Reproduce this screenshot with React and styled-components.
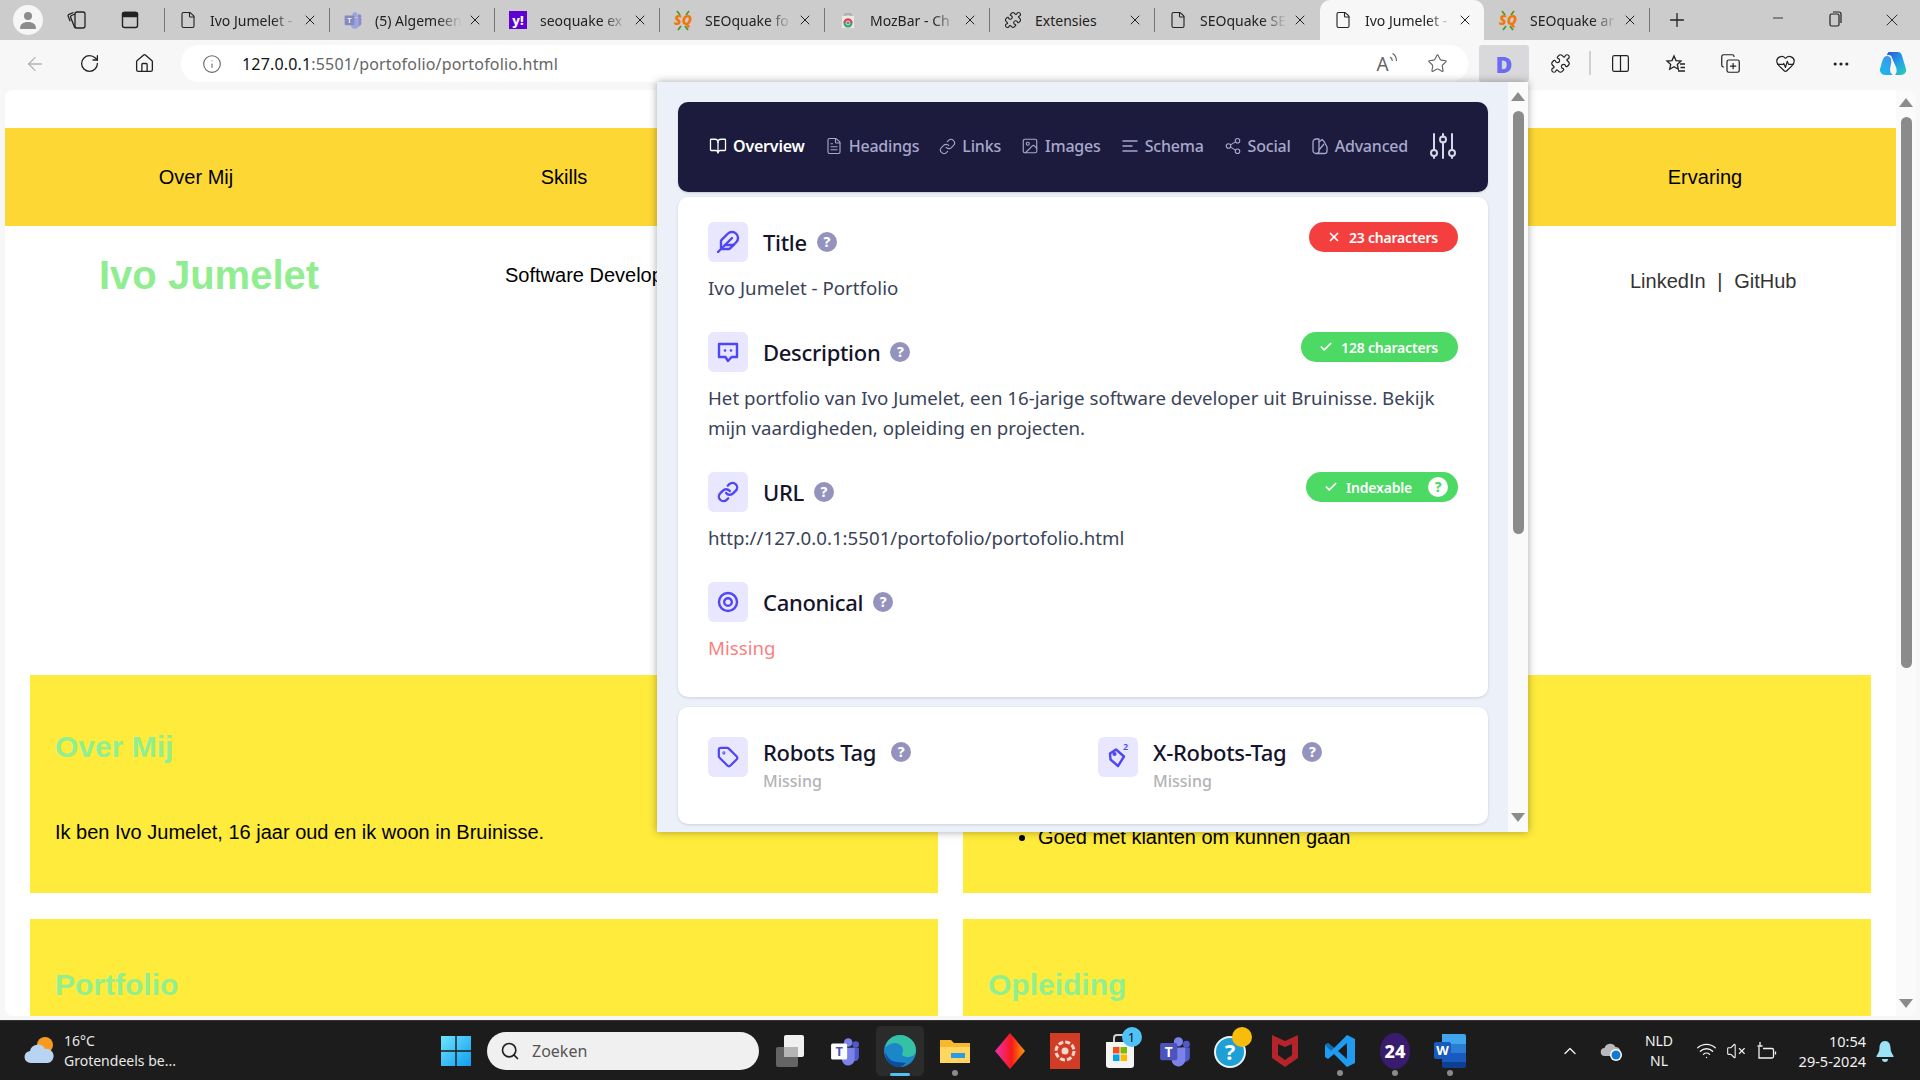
import React from 'react';
import styled, { createGlobalStyle } from 'styled-components';
import {
  ArrowLeft, RotateCw, House, Info, Star, Puzzle, Columns2, CopyPlus, HeartPulse, Ellipsis,
  File, X, Plus, Minus, BookOpen, FileText, Link as LinkIcon, Image, Share2,
  Feather, Tag, ChevronUp, Wifi, VolumeX, Search, Check,
} from 'lucide-react';

const UI = '"Noto Sans", "Open Sans", sans-serif';
const ARIAL = '"Liberation Sans", Arial, sans-serif';

const GlobalStyle = createGlobalStyle`
  html, body { margin: 0; padding: 0; height: 100%; overflow: hidden; }
  body { font-family: ${UI}; background: #f7f7f7; }
  * { box-sizing: border-box; }
`;

const Screen = styled.div`
  position: relative;
  width: 1920px;
  height: 1080px;
  display: flex;
  flex-direction: column;
  overflow: hidden;
`;

/* browser tabs */
const TabStrip = styled.div`
  height: 40px;
  background: #cccccc;
  display: flex;
  align-items: center;
  flex: none;
`;
const StripLeft = styled.div`
  width: 164px;
  display: flex;
  align-items: center;
  padding-left: 13px;
  flex: none;
`;
const Avatar = styled.div`
  width: 30px;
  height: 30px;
  border-radius: 50%;
  background: #f6f6f6;
  display: flex;
  align-items: center;
  justify-content: center;
`;
const StripIcon = styled.div`
  width: ${(p) => p.$w || 54}px;
  display: flex;
  justify-content: center;
  color: #222;
`;
const TabSep = styled.div`
  width: 1px;
  height: 24px;
  flex: none;
  background: ${(p) => (p.$hidden ? 'transparent' : '#777')};
`;
const Tab = styled.div`
  width: 164px;
  height: 40px;
  flex: none;
  display: flex;
  align-items: center;
  padding: 0 11px 0 14px;
  border-radius: 10px 10px 0 0;
  background: ${(p) => (p.$active ? '#f7f7f7' : 'transparent')};
  color: #222;
`;
const TabFav = styled.div`
  width: 18px;
  height: 18px;
  margin-right: 13px;
  flex: none;
  display: flex;
  align-items: center;
  justify-content: center;
`;
const TabLabel = styled.div`
  flex: 1;
  min-width: 0;
  overflow: hidden;
  white-space: nowrap;
  font-size: 14px;
  color: #222;
  mask-image: ${(p) => (p.$plain ? 'none' : 'linear-gradient(to right, #000 68%, transparent 94%)')};
`;
const WindowControls = styled.div`
  margin-left: auto;
  display: flex;
`;
const WindowButton = styled.div`
  width: 57px;
  display: flex;
  justify-content: center;
  color: #222;
`;

/* address bar row */
const Toolbar = styled.div`
  height: 50px;
  flex: none;
  background: #f7f7f7;
  display: flex;
  align-items: flex-start;
  padding: 5px 0 0 7px;
`;
const ToolButton = styled.div`
  width: ${(p) => p.$w || 55}px;
  height: 37px;
  flex: none;
  display: flex;
  align-items: center;
  justify-content: center;
  color: ${(p) => p.$color || '#222'};
`;
const AddressBar = styled.div`
  width: 1287px;
  height: 37px;
  margin-left: 9px;
  background: #fff;
  border-radius: 18px;
  display: flex;
  align-items: center;
  padding: 0 6px 0 21px;
  flex: none;
`;
const UrlText = styled.div`
  margin-left: 20px;
  font-size: 16px;
  letter-spacing: 0.17px;
  color: #666;
  flex: 1;
  b { font-weight: 400; color: #111; }
`;
const AddressIcon = styled.div`
  width: 50px;
  display: flex;
  justify-content: center;
  color: #666;
`;
const ReadAloud = styled.div`
  display: flex;
  align-items: flex-start;
  font-size: 19px;
  line-height: 24px;
  color: #666;
`;
const ExtButton = styled.div`
  width: 50px;
  height: 37px;
  margin: 0 4px 0 11px;
  flex: none;
  background: #d9d9dc;
  border-radius: 3px;
  display: flex;
  align-items: center;
  justify-content: center;
  font-family: ${UI};
  font-weight: 900;
  font-size: 23px;
  color: #6b6bf5;
`;
const ToolSep = styled.div`
  width: 2px;
  height: 24px;
  margin: 6px 2px 0 1px;
  background: #d0d0d0;
  flex: none;
`;

/* the page in the browser */
const Viewport = styled.div`
  height: 930px;
  flex: none;
  background: #f7f7f7;
  padding: 0 4px 4px 5px;
`;
const Page = styled.div`
  height: 100%;
  background: #fff;
  border-radius: 8px;
  display: flex;
  overflow: hidden;
`;
const Content = styled.div`
  width: 1891px;
  flex: none;
  padding-top: 38px;
  font-family: ${ARIAL};
  color: #000;
`;
const SiteNav = styled.nav`
  height: 98px;
  background: #fdd835;
  display: flex;
  align-items: center;
  justify-content: space-around;
  font-size: 20px;
`;
const Hero = styled.header`
  height: 449px;
  display: grid;
  grid-template-columns: 406px 1125px auto;
  padding: 26px 0 0 94px;
  align-items: start;
`;
const SiteTitle = styled.h1`
  margin: 0;
  font-size: 40px;
  line-height: 46px;
  font-weight: 700;
  color: #90ee90;
`;
const Role = styled.div`
  font-size: 20px;
  line-height: 46px;
`;
const Socials = styled.div`
  font-size: 20px;
  line-height: 24px;
  padding-top: 17px;
  color: #333;
  white-space: pre;
  word-spacing: 0.3px;
`;
const Blocks = styled.div`
  display: grid;
  grid-template-columns: 908px 908px;
  column-gap: 25px;
  row-gap: 26px;
  padding: 0 25px;
  grid-auto-rows: 218px;
`;
const Block = styled.section`
  background: #ffeb3b;
  padding: ${(p) => p.$top || 55}px 25px 0;
`;
const BlockTitle = styled.h2`
  margin: 0 0 56px;
  font-size: 30px;
  line-height: 34px;
  font-weight: 700;
  color: #90f090;
`;
const BlockText = styled.p`
  margin: 0;
  font-size: 20px;
  line-height: 24px;
`;
const BlockList = styled.ul`
  margin: 0;
  padding-left: 50px;
  font-size: 20px;
  line-height: 24px;
`;

/* scrollbars */
const ScrollTrack = styled.div`
  width: 20px;
  flex: none;
  display: flex;
  flex-direction: column;
  align-items: center;
  padding: ${(p) => p.$pad}px 0;
  background: ${(p) => p.$bg};
`;
const ArrowUp = styled.div`
  width: 0;
  height: 0;
  border-left: 7px solid transparent;
  border-right: 7px solid transparent;
  border-bottom: 9px solid #8b8b8b;
  flex: none;
`;
const ArrowDown = styled(ArrowUp)`
  margin-top: auto;
  border-bottom: 0;
  border-top: 9px solid #8b8b8b;
`;
const Thumb = styled.div`
  width: 11px;
  margin-top: 10px;
  height: ${(p) => p.$h}px;
  background: #8b8b8b;
  border-radius: 6px;
  flex: none;
`;

/* the SEO extension popup, lies over the page */
const Popup = styled.div`
  position: absolute;
  left: 657px;
  top: 82px;
  width: 871px;
  height: 750px;
  background: #ecf0f8;
  display: flex;
  box-shadow: 0 0 8px rgba(0, 0, 0, 0.35);
  overflow: hidden;
`;
const PopupBody = styled.div`
  width: 851px;
  flex: none;
  padding: 20px 20px 0 21px;
  display: flex;
  flex-direction: column;
`;
const PopupNav = styled.div`
  height: 90px;
  flex: none;
  background: #1c1b3d;
  border-radius: 10px;
  display: flex;
  align-items: center;
  gap: 20px;
  padding: 0 0 2px 31px;
  box-shadow: 0 1px 2px rgba(0, 0, 0, 0.15);
`;
const NavItem = styled.div`
  display: flex;
  align-items: center;
  gap: 6px;
  font-size: 16px;
  letter-spacing: -0.2px;
  font-weight: ${(p) => (p.$active ? 600 : 500)};
  color: ${(p) => (p.$active ? '#fff' : '#a7a8cb')};
`;
const NavEnd = styled.div`
  color: #d6d6e8;
  display: flex;
  margin-left: 1px;
`;
const Card = styled.div`
  background: #fff;
  border-radius: 10px;
  box-shadow: 0 1px 3px rgba(40, 40, 90, 0.15);
  flex: none;
`;
const MainCard = styled(Card)`
  height: 500px;
  margin-top: 5px;
  padding: 25px 30px 0;
`;
const RobotsCard = styled(Card)`
  height: 117px;
  margin-top: 10px;
  padding: 30px 30px 0;
  display: grid;
  grid-template-columns: 390px 1fr;
`;
const Field = styled.div`
  margin-bottom: 29px;
`;
const FieldHead = styled.div`
  display: flex;
  align-items: flex-start;
  justify-content: space-between;
`;
const FieldName = styled.div`
  display: flex;
  align-items: center;
  height: 40px;
`;
const IconBox = styled.div`
  position: relative;
  width: 40px;
  height: 40px;
  flex: none;
  border-radius: 6px;
  background: #e9e6ff;
  color: #4f46f5;
  display: flex;
  align-items: center;
  justify-content: center;
`;
const TagCount = styled.span`
  position: absolute;
  left: 25px;
  top: 4px;
  font-size: 9px;
  line-height: 11px;
  font-weight: 600;
`;
const FieldTitle = styled.div`
  margin-left: 15px;
  font-size: 22px;
  font-weight: 500;
  letter-spacing: -0.3px;
  color: #14142b;
`;
const Help = styled.span`
  width: 20px;
  height: 20px;
  border-radius: 50%;
  flex: none;
  margin-left: ${(p) => p.$gap || 10}px;
  background: ${(p) => (p.$light ? '#fff' : '#9493bd')};
  color: ${(p) => (p.$light ? '#4cd964' : '#fff')};
  font-size: 14px;
  font-weight: 800;
  line-height: 20px;
  text-align: center;
`;
const Pill = styled.div`
  height: 30px;
  border-radius: 15px;
  display: flex;
  align-items: center;
  gap: 8px;
  padding: 0 ${(p) => p.$right || 20}px 0 18px;
  background: ${(p) => p.$bg};
  color: #fff;
  font-size: 14px;
  font-weight: 600;
  letter-spacing: -0.2px;
`;
const FieldText = styled.div`
  margin-top: 11px;
  font-size: 18.7px;
  line-height: 30px;
  color: ${(p) => p.$color || '#3a4358'};
`;
const RobotsItem = styled.div`
  display: flex;
`;
const RobotsText = styled.div`
  display: flex;
  flex-direction: column;
`;
const RobotsHead = styled.div`
  display: flex;
  align-items: center;
  height: 30px;
`;
const RobotsMissing = styled.div`
  margin-left: 15px;
  font-size: 16px;
  line-height: 28px;
  font-weight: 500;
  color: #b3b3b3;
`;

/* windows taskbar */
const Taskbar = styled.div`
  height: 60px;
  flex: none;
  background: #1c1c1c;
  border-top: 1px solid #333;
  display: flex;
  align-items: center;
  color: #f2f2f2;
`;
const Weather = styled.div`
  width: 428px;
  flex: none;
  display: flex;
  align-items: center;
  gap: 7px;
  padding-left: 23px;
  font-size: 14px;
  line-height: 20px;
  color: #e8e8e8;
`;
const SearchBox = styled.div`
  width: 272px;
  height: 38px;
  flex: none;
  margin: 0 3.5px 0 4px;
  background: #f0f0f0;
  border-radius: 19px;
  display: flex;
  align-items: center;
  gap: 12px;
  padding-left: 13px;
  color: #222;
  font-size: 16px;
  span { color: #555; }
`;
const AppSlot = styled.div`
  position: relative;
  width: 55px;
  height: 59px;
  flex: none;
  display: flex;
  align-items: center;
  justify-content: center;
`;
const ActiveBack = styled.div`
  width: 48px;
  height: 50px;
  border-radius: 5px;
  background: ${(p) => (p.$on ? '#2b2b2b' : 'transparent')};
  display: flex;
  align-items: center;
  justify-content: center;
`;
const Running = styled.div`
  position: absolute;
  left: 50%;
  bottom: 4px;
  transform: translateX(-50%);
  width: ${(p) => (p.$on ? 20 : 6)}px;
  height: ${(p) => (p.$on ? 3 : 6)}px;
  border-radius: 3px;
  background: ${(p) => (p.$on ? '#4fc3f7' : '#8a8a8a')};
`;
const Tray = styled.div`
  margin-left: auto;
  display: flex;
  align-items: center;
  padding-right: 25px;
`;
const TraySlot = styled.div`
  width: ${(p) => p.$w || 30}px;
  display: flex;
  justify-content: center;
  color: #f2f2f2;
`;
const Lang = styled.div`
  width: 52px;
  margin-right: 6px;
  text-align: center;
  font-size: 14px;
  line-height: 20px;
`;
const Clock = styled.div`
  width: 85px;
  text-align: right;
  font-size: 14.5px;
  line-height: 20px;
  margin-right: 9px;
`;

const tabs = [
  { label: 'Ivo Jumelet -', fav: 'file' },
  { label: '(5) Algemeen', fav: 'teams' },
  { label: 'seoquake ex', fav: 'yahoo' },
  { label: 'SEOquake fo', fav: 'sq' },
  { label: 'MozBar - Ch', fav: 'moz' },
  { label: 'Extensies', fav: 'puzzle', plain: true },
  { label: 'SEOquake SE', fav: 'file' },
  { label: 'Ivo Jumelet -', fav: 'file', active: true },
  { label: 'SEOquake ar', fav: 'sq' },
];

function Favicon({ type }) {
  if (type === 'file') return <File size={18} strokeWidth={1.5} />;
  if (type === 'puzzle') return <Puzzle size={18} strokeWidth={1.5} />;
  if (type === 'teams') return <TeamsIcon size={18} faded />;
  if (type === 'yahoo') {
    return (
      <svg width="18" height="18" viewBox="0 0 18 18">
        <rect width="18" height="18" fill="#5f01d1" />
        <text x="9" y="14" textAnchor="middle" fontSize="13" fontWeight="800" fontFamily={UI} fill="#fff">y!</text>
      </svg>
    );
  }
  if (type === 'sq') {
    return (
      <svg width="22" height="24" viewBox="0 0 22 24" style={{ flex: 'none' }}>
        <path d="M5 3l3 4M17 3l-3 4M6 22l3-4M16 22l-3-4" stroke="#4c9a2a" strokeWidth="1.8" />
        <text x="11" y="17" textAnchor="middle" fontSize="14" fontWeight="900" fontStyle="italic" fontFamily={UI} fill="#f0780a">SQ</text>
      </svg>
    );
  }
  return (
    <svg width="18" height="18" viewBox="0 0 18 18">
      <path d="M3 5h12v12H3z" fill="#e8e8e8" />
      <path d="M6 5V3h6v2" fill="none" stroke="#999" />
      <circle cx="9" cy="12" r="4.5" fill="#34a853" />
      <path d="M4.5 12a4.5 4.5 0 0 1 9 0z" fill="#ea4335" />
      <circle cx="9" cy="12" r="2" fill="#4285f4" stroke="#fff" strokeWidth=".7" />
    </svg>
  );
}

function TeamsIcon({ size = 28, faded }) {
  return (
    <svg width={size} height={size} viewBox="0 0 28 28" opacity={faded && size < 20 ? 0.55 : 1}>
      <circle cx="17" cy="6" r="4" fill="#7b83eb" />
      <circle cx="24" cy="8" r="3" fill="#5059c9" />
      <path d="M20 11h7v9a4 4 0 0 1-7 2z" fill="#5059c9" />
      <path d="M9 11h14v10a6 6 0 0 1-12 1z" fill="#7b83eb" />
      <rect x="1" y="7" width="15" height="15" rx="1.5" fill={faded ? '#4b53bc' : '#fff'} />
      <text x="8.5" y="19" textAnchor="middle" fontSize="12" fontWeight="700" fontFamily={UI} fill={faded ? '#fff' : '#4b53bc'}>T</text>
    </svg>
  );
}

function WorkspacesIcon() {
  return (
    <svg width="22" height="22" viewBox="0 0 22 22" fill="none" stroke="#222" strokeWidth="1.3">
      <rect x="9" y="3" width="10" height="16" rx="2" />
      <path d="M9 5L5.500 6.500a1.500 1.500 0 0 0-.8 2l3.800 9.500a1.500 1.500 0 0 0 1.500.9" />
      <path d="M7.500 3.500L3 5.300a1.500 1.500 0 0 0-.8 2l2 5" />
    </svg>
  );
}

function VerticalTabsIcon() {
  return (
    <svg width="20" height="20" viewBox="0 0 20 20" fill="none" stroke="#222" strokeWidth="1.4">
      <rect x="2.500" y="2.500" width="15" height="15" rx="2" />
      <rect x="2.500" y="2.500" width="15" height="4" rx="1.500" fill="#222" />
    </svg>
  );
}

function RestoreIcon() {
  return (
    <svg width="18" height="18" viewBox="0 0 18 18" fill="none" stroke="#222" strokeWidth="1.2">
      <rect x="4" y="4" width="9" height="12" rx="1.500" />
      <path d="M7 2h6a2 2 0 0 1 2 2v9" />
    </svg>
  );
}

function SoundWaves() {
  return (
    <svg width="9" height="14" viewBox="0 0 9 14" fill="none" stroke="#666" strokeWidth="1.2">
      <path d="M1 5c1.500.8 2.300 2.200 2.300 4M3.500 1.500C6 2.800 7.500 5 7.500 9" />
    </svg>
  );
}

function FavoritesIcon() {
  return (
    <svg width="22" height="22" viewBox="0 0 22 22" fill="none" stroke="#222" strokeWidth="1.3">
      <path d="M9 3l2 4.600 5 .5-3.700 3.300 1 4.900L9 13.800l-4.300 2.500 1-4.900L2 8.100l5-.5z" />
      <path d="M15 11h5M15.500 14.500h4.500M13 18h7" />
    </svg>
  );
}

function CopilotIcon() {
  return (
    <svg width="28" height="28" viewBox="0 0 28 28">
      <defs>
        <linearGradient id="cop" x1="0" y1="0" x2="1" y2="1">
          <stop offset="0" stopColor="#2458d8" />
          <stop offset=".6" stopColor="#25a7e8" />
          <stop offset="1" stopColor="#2ecfa8" />
        </linearGradient>
        <linearGradient id="cop2" x1="0" y1="1" x2="1" y2="0">
          <stop offset="0" stopColor="#12c0e8" />
          <stop offset="1" stopColor="#4a8cf0" />
        </linearGradient>
      </defs>
      <path d="M10 2h9c3 0 4 3 5 7l3 10c1 3-2 6-5 6h-6c2-2 2-5 1-8L13 8c-.5-3-3-3.500-5-2.500C8 4 9 2 10 2z" fill="url(#cop)" />
      <path d="M8 6c-3 0-4 3-5 6l-2 7c-.5 3 2 6 5 6h8c-2-1-3-3-3-6l1-5c1-4 0-8-4-8z" fill="url(#cop2)" />
    </svg>
  );
}

function SchemaIcon() {
  return (
    <svg width="18" height="18" viewBox="0 0 18 18" fill="none" stroke="currentColor" strokeWidth="1.5" strokeLinecap="round">
      <path d="M2 4h14M2 9h9M2 14h14" />
    </svg>
  );
}

function AdvancedIcon() {
  return (
    <svg width="18" height="18" viewBox="0 0 18 18" fill="none" stroke="currentColor" strokeWidth="1.3" strokeLinejoin="round">
      <path d="M5 2h3v12a2.500 2.500 0 0 1-2.500 2.500H5A3 3 0 0 1 2 13.500V5a3 3 0 0 1 3-3z" />
      <path d="M8 5l3-2.500 2 2L16 10v4a2.500 2.500 0 0 1-2.500 2.500h-8" />
      <path d="M8 13l5-6" />
    </svg>
  );
}

function SettingsSlidersIcon() {
  return (
    <svg width="28" height="28" viewBox="0 0 28 28" fill="none" stroke="currentColor" strokeWidth="2" strokeLinecap="round">
      <path d="M5 2v16M14 10v16M23 2v16M5 24v2M14 2v3M23 24v2" />
      <circle cx="5" cy="21" r="3" />
      <circle cx="14" cy="7.500" r="3" />
      <circle cx="23" cy="21" r="3" />
    </svg>
  );
}

function BubbleIcon() {
  return (
    <svg width="24" height="24" viewBox="0 0 24 24" fill="none" stroke="currentColor" strokeWidth="2.400" strokeLinejoin="round">
      <path d="M3 4h18v13h-5.500L12 21l-2.500-4H3z" />
      <circle cx="9" cy="10.500" r="1.300" fill="currentColor" stroke="none" />
      <circle cx="15" cy="10.500" r="1.300" fill="currentColor" stroke="none" />
    </svg>
  );
}

function RingsIcon() {
  return (
    <svg width="24" height="24" viewBox="0 0 24 24" fill="none" stroke="currentColor" strokeWidth="2.400">
      <circle cx="12" cy="12" r="9" />
      <circle cx="12" cy="12" r="3.800" />
    </svg>
  );
}

function TagShape() {
  return (
    <svg width="26" height="26" viewBox="0 0 26 26" fill="none" stroke="currentColor" strokeWidth="2.400" strokeLinejoin="round">
      <path d="M5 9.500L11 5.500 19 12.500 13 22 5.500 15.500z" />
      <circle cx="9.500" cy="10" r=".9" fill="currentColor" />
    </svg>
  );
}

function WeatherIcon() {
  return (
    <svg width="34" height="34" viewBox="0 0 34 34">
      <circle cx="22" cy="11" r="8" fill="#f79a1e" />
      <path d="M8 29a6 6 0 0 1-1-12 8 8 0 0 1 15-2 7 7 0 0 1 3 14z" fill="#b8d4f2" />
    </svg>
  );
}

function StartIcon() {
  return (
    <svg width="30" height="30" viewBox="0 0 30 30">
      <defs>
        <linearGradient id="win" x1="0" y1="0" x2="1" y2="1">
          <stop offset="0" stopColor="#6fe3fb" />
          <stop offset="1" stopColor="#0f9df0" />
        </linearGradient>
      </defs>
      <path d="M0 0h14.300v14.300H0zM15.700 0H30v14.300H15.700zM0 15.700h14.300V30H0zM15.700 15.700H30V30H15.700z" fill="url(#win)" />
    </svg>
  );
}

function TaskViewIcon() {
  return (
    <svg width="30" height="36" viewBox="0 0 30 36">
      <rect x="9" y="2" width="20" height="22" rx="2" fill="#f0f0f0" />
      <rect x="1" y="14" width="22" height="20" rx="2" fill="#6a6a6a" opacity=".92" />
      <rect x="9" y="14" width="14" height="10" fill="#b5b5b5" />
    </svg>
  );
}

function EdgeIcon() {
  return (
    <svg width="34" height="34" viewBox="0 0 34 34">
      <circle cx="17" cy="17" r="16" fill="#1b87c9" />
      <path d="M2 15C3 6 10 1 17 1c9 0 16 7 16 15 0 5-4 7-8 7-3 0-6-1-6-3 0-1 1-2 1-4 0-4-4-7-8-7-5 0-9 3-10 6z" fill="#35c1a5" />
      <path d="M13 33c-7-2-11-8-11-15 2 6 7 10 12 10 3 0 6 1 9 1-3 3-6 5-10 4z" fill="#0a4f9e" />
    </svg>
  );
}

function FolderIcon() {
  return (
    <svg width="32" height="30" viewBox="0 0 32 30">
      <path d="M1 4h11l3 3h16v20H1z" fill="#f5b82e" />
      <path d="M1 11h30v16H1z" fill="#ffd75e" />
      <rect x="12" y="17" width="14" height="5" fill="#2b9ae8" />
    </svg>
  );
}

function DiamondIcon() {
  return (
    <svg width="30" height="36" viewBox="0 0 30 36">
      <defs>
        <linearGradient id="dia" x1="0" y1="0" x2="1" y2="0">
          <stop offset="0" stopColor="#ec2fb5" />
          <stop offset=".55" stopColor="#f81a1a" />
          <stop offset="1" stopColor="#fc9b07" />
        </linearGradient>
      </defs>
      <path d="M15 0l15 18-15 18L0 18z" fill="url(#dia)" />
    </svg>
  );
}

function RedAppIcon() {
  return (
    <svg width="30" height="36" viewBox="0 0 30 36">
      <rect width="30" height="36" fill="#d13d24" />
      <circle cx="15" cy="18" r="9" fill="none" stroke="#f6d8d0" strokeWidth="3" strokeDasharray="5 2.070" />
      <circle cx="15" cy="18" r="3.500" fill="#f6d8d0" />
    </svg>
  );
}

function StoreIcon() {
  return (
    <svg width="32" height="36" viewBox="0 0 32 36">
      <path d="M2 9h28v23a3 3 0 0 1-3 3H5a3 3 0 0 1-3-3z" fill="#f4f4f4" />
      <path d="M10 9V5a3 3 0 0 1 3-3h6a3 3 0 0 1 3 3v4" fill="none" stroke="#cfcfcf" strokeWidth="2" />
      <rect x="9" y="14" width="6.500" height="6.500" fill="#f25022" />
      <rect x="16.500" y="14" width="6.500" height="6.500" fill="#7fba00" />
      <rect x="9" y="21.500" width="6.500" height="6.500" fill="#00a4ef" />
      <rect x="16.500" y="21.500" width="6.500" height="6.500" fill="#ffb900" />
    </svg>
  );
}

const StoreBadge = styled.div`
  position: absolute;
  left: 29px;
  top: 6px;
  width: 20px;
  height: 20px;
  border-radius: 50%;
  background: #4fc3f7;
  color: #111;
  font-size: 13px;
  line-height: 20px;
  text-align: center;
`;
const HelpBadge = styled(StoreBadge)`
  background: #f8bc0a;
`;

function HelpAppIcon() {
  return (
    <svg width="32" height="36" viewBox="0 0 32 36">
      <circle cx="16" cy="19" r="15" fill="#1e9fd6" stroke="#e8f4fa" strokeWidth="2" />
      <text x="16" y="27" textAnchor="middle" fontSize="22" fontWeight="700" fontFamily={UI} fill="#fff">?</text>
    </svg>
  );
}

function ShieldIcon() {
  return (
    <svg width="28" height="34" viewBox="0 0 28 34">
      <path d="M1 1l13 6 13-6v23l-13 9-13-9z" fill="#b5242a" />
      <path d="M7 10l7 3 7-3v11l-7 5-7-5z" fill="#1c1c1c" />
    </svg>
  );
}

function VsCodeIcon() {
  return (
    <svg width="32" height="34" viewBox="0 0 32 34">
      <path d="M23 1l8 4v24l-8 4-13-13-6 5-3-2v-12l3-2 6 5z" fill="#1f9cf0" />
      <path d="M23 9l-9 8 9 8z" fill="#1c1c1c" />
      <path d="M1 11l3-2 6 5-3 3z" fill="#0f6fb5" />
    </svg>
  );
}

function NumberAppIcon() {
  return (
    <svg width="32" height="36" viewBox="0 0 32 36">
      <ellipse cx="16" cy="18" rx="15" ry="18" fill="#3a1c6e" />
      <text x="16" y="25" textAnchor="middle" fontSize="18" fontWeight="800" fontFamily={UI} fill="#fff">24</text>
    </svg>
  );
}

function WordIcon() {
  return (
    <svg width="32" height="36" viewBox="0 0 32 36">
      <path d="M8 1h22a2 2 0 0 1 2 2v8H8z" fill="#41a5ee" />
      <path d="M8 11h24v9H8z" fill="#2b7cd3" />
      <path d="M8 20h24v9H8z" fill="#185abd" />
      <path d="M8 29h24v4a2 2 0 0 1-2 2H10a2 2 0 0 1-2-2z" fill="#103f91" />
      <rect y="9" width="17" height="17" rx="2" fill="#185abd" />
      <text x="8.500" y="22" textAnchor="middle" fontSize="13" fontWeight="700" fontFamily={UI} fill="#fff">W</text>
    </svg>
  );
}

function OneDriveIcon() {
  return (
    <svg width="24" height="24" viewBox="0 0 24 24">
      <path d="M5 17a4 4 0 0 1-.5-8 6 6 0 0 1 11-1 5 5 0 0 1 3 9z" fill="#b9b9b9" />
      <circle cx="16" cy="16" r="6" fill="#fff" />
      <circle cx="16" cy="16" r="4.500" fill="#1479d0" />
    </svg>
  );
}

function BatteryIcon() {
  return (
    <svg width="24" height="24" viewBox="0 0 24 24" fill="none" stroke="#f2f2f2" strokeWidth="1.300">
      <path d="M5 8v11h13a1.500 1.500 0 0 0 1.500-1.500V11A1.500 1.500 0 0 0 18 9.500H9M21.500 12.500v3" />
      <path d="M6 3v4M3.500 7h5" />
    </svg>
  );
}

function BellIcon() {
  return (
    <svg width="18" height="24" viewBox="0 0 18 24">
      <path d="M9 2c4 0 5.500 3.500 5.500 7 0 4 2 6 3 8v1H.5v-1c1-2 3-4 3-8 0-3.500 1.500-7 5.500-7z" fill="#9be3f5" />
      <path d="M6 20h6a3 3 0 0 1-6 0z" fill="#9be3f5" />
    </svg>
  );
}

const navItems = [
  { label: 'Overview', icon: <BookOpen size={18} strokeWidth={1.7} />, active: true },
  { label: 'Headings', icon: <FileText size={18} strokeWidth={1.5} /> },
  { label: 'Links', icon: <LinkIcon size={17} strokeWidth={1.5} /> },
  { label: 'Images', icon: <Image size={18} strokeWidth={1.5} /> },
  { label: 'Schema', icon: <SchemaIcon /> },
  { label: 'Social', icon: <Share2 size={18} strokeWidth={1.5} /> },
  { label: 'Advanced', icon: <AdvancedIcon /> },
];

const apps = [
  { icon: <TaskViewIcon /> },
  { icon: <TeamsIcon size={30} /> },
  { icon: <EdgeIcon />, active: true },
  { icon: <FolderIcon />, dot: true },
  { icon: <DiamondIcon /> },
  { icon: <RedAppIcon /> },
  { icon: <StoreIcon />, badge: <StoreBadge>1</StoreBadge> },
  { icon: <TeamsIcon size={32} faded /> },
  { icon: <HelpAppIcon />, badge: <HelpBadge /> },
  { icon: <ShieldIcon /> },
  { icon: <VsCodeIcon />, dot: true },
  { icon: <NumberAppIcon />, dot: true },
  { icon: <WordIcon />, dot: true },
];

function Scrollbar({ thumb, pad, bg }) {
  return (
    <ScrollTrack $pad={pad} $bg={bg}>
      <ArrowUp />
      <Thumb $h={thumb} />
      <ArrowDown />
    </ScrollTrack>
  );
}

function SeoField({ icon, title, pill, children }) {
  return (
    <Field>
      <FieldHead>
        <FieldName>
          <IconBox>{icon}</IconBox>
          <FieldTitle>{title}</FieldTitle>
          <Help>?</Help>
        </FieldName>
        {pill}
      </FieldHead>
      {children}
    </Field>
  );
}

export default function App() {
  return (
    <Screen>
      <GlobalStyle />
      <TabStrip>
        <StripLeft>
          <Avatar>
            <svg width="20" height="20" viewBox="0 0 20 20" fill="#8c8c8c">
              <circle cx="10" cy="6" r="4" />
              <path d="M2 19c0-5 3-7 8-7s8 2 8 7z" />
            </svg>
          </Avatar>
          <StripIcon $w={68}><WorkspacesIcon /></StripIcon>
          <StripIcon $w={38}><VerticalTabsIcon /></StripIcon>
        </StripLeft>
        {tabs.map((t, i) => (
          <React.Fragment key={i}>
            <TabSep $hidden={t.active || (tabs[i - 1] && tabs[i - 1].active)} />
            <Tab $active={t.active}>
              <TabFav><Favicon type={t.fav} /></TabFav>
              <TabLabel $plain={t.plain}>{t.label}</TabLabel>
              <X size={16} strokeWidth={1.5} />
            </Tab>
          </React.Fragment>
        ))}
        <TabSep />
        <StripIcon><Plus size={22} strokeWidth={1.4} /></StripIcon>
        <WindowControls>
          <WindowButton><Minus size={16} strokeWidth={1.3} /></WindowButton>
          <WindowButton><RestoreIcon /></WindowButton>
          <WindowButton><X size={20} strokeWidth={1.1} /></WindowButton>
        </WindowControls>
      </TabStrip>

      <Toolbar>
        <ToolButton $color="#b4b4b4"><ArrowLeft size={22} strokeWidth={1.4} /></ToolButton>
        <ToolButton><RotateCw size={21} strokeWidth={1.5} /></ToolButton>
        <ToolButton><House size={21} strokeWidth={1.5} /></ToolButton>
        <AddressBar>
          <Info size={20} strokeWidth={1.3} color="#666" />
          <UrlText><b>127.0.0.1</b>:5501/portofolio/portofolio.html</UrlText>
          <AddressIcon><ReadAloud>A<SoundWaves /></ReadAloud></AddressIcon>
          <AddressIcon><Star size={21} strokeWidth={1.3} /></AddressIcon>
        </AddressBar>
        <ExtButton>D</ExtButton>
        <ToolButton><Puzzle size={21} strokeWidth={1.4} /></ToolButton>
        <ToolSep />
        <ToolButton><Columns2 size={21} strokeWidth={1.4} /></ToolButton>
        <ToolButton><FavoritesIcon /></ToolButton>
        <ToolButton><CopyPlus size={21} strokeWidth={1.4} /></ToolButton>
        <ToolButton><HeartPulse size={21} strokeWidth={1.4} /></ToolButton>
        <ToolButton><Ellipsis size={20} strokeWidth={1.8} /></ToolButton>
        <ToolButton $w={50}><CopilotIcon /></ToolButton>
      </Toolbar>

      <Viewport>
        <Page>
          <Content>
            <SiteNav>
              <span>Over Mij</span>
              <span>Skills</span>
              <span>Portfolio</span>
              <span>Opleiding</span>
              <span>Ervaring</span>
            </SiteNav>
            <Hero>
              <SiteTitle>Ivo Jumelet</SiteTitle>
              <Role>Software Developer</Role>
              <Socials>LinkedIn  |  GitHub</Socials>
            </Hero>
            <Blocks>
              <Block>
                <BlockTitle>Over Mij</BlockTitle>
                <BlockText>Ik ben Ivo Jumelet, 16 jaar oud en ik woon in Bruinisse.</BlockText>
              </Block>
              <Block $top={150}>
                <BlockList><li>Goed met klanten om kunnen gaan</li></BlockList>
              </Block>
              <Block $top={49}>
                <BlockTitle>Portfolio</BlockTitle>
              </Block>
              <Block $top={49}>
                <BlockTitle>Opleiding</BlockTitle>
              </Block>
            </Blocks>
          </Content>
          <Scrollbar thumb={551} pad={8} bg="#fafafa" />
        </Page>
      </Viewport>

      <Taskbar>
        <Weather>
          <WeatherIcon />
          <div>16°C<br />Grotendeels be...</div>
        </Weather>
        <AppSlot><StartIcon /></AppSlot>
        <SearchBox><Search size={20} strokeWidth={2} /><span>Zoeken</span></SearchBox>
        {apps.map((a, i) => (
          <AppSlot key={i}>
            <ActiveBack $on={a.active}>{a.icon}</ActiveBack>
            {a.badge}
            {(a.dot || a.active) && <Running $on={a.active} />}
          </AppSlot>
        ))}
        <Tray>
          <TraySlot $w={42}><ChevronUp size={20} strokeWidth={1.6} /></TraySlot>
          <TraySlot $w={42}><OneDriveIcon /></TraySlot>
          <Lang>NLD<br />NL</Lang>
          <TraySlot><Wifi size={21} strokeWidth={1.5} /></TraySlot>
          <TraySlot><VolumeX size={20} strokeWidth={1.3} /></TraySlot>
          <TraySlot><BatteryIcon /></TraySlot>
          <Clock>10:54<br />29-5-2024</Clock>
          <TraySlot $w={20}><BellIcon /></TraySlot>
        </Tray>
      </Taskbar>

      <Popup>
        <PopupBody>
          <PopupNav>
            {navItems.map((n) => (
              <NavItem key={n.label} $active={n.active}>{n.icon}{n.label}</NavItem>
            ))}
            <NavEnd><SettingsSlidersIcon /></NavEnd>
          </PopupNav>
          <MainCard>
            <SeoField
              icon={<Feather size={24} strokeWidth={2.4} />}
              title="Title"
              pill={<Pill $bg="#f43f3f"><X size={14} strokeWidth={3} />23 characters</Pill>}
            >
              <FieldText>Ivo Jumelet - Portfolio</FieldText>
            </SeoField>
            <SeoField
              icon={<BubbleIcon />}
              title="Description"
              pill={<Pill $bg="#4cd964"><Check size={14} strokeWidth={3} />128 characters</Pill>}
            >
              <FieldText>
                Het portfolio van Ivo Jumelet, een 16-jarige software developer uit Bruinisse. Bekijk mijn vaardigheden, opleiding en projecten.
              </FieldText>
            </SeoField>
            <SeoField
              icon={<LinkIcon size={22} strokeWidth={2.6} />}
              title="URL"
              pill={<Pill $bg="#4cd964" $right={10}><Check size={14} strokeWidth={3} />Indexable<Help $light $gap={8}>?</Help></Pill>}
            >
              <FieldText>http://127.0.0.1:5501/portofolio/portofolio.html</FieldText>
            </SeoField>
            <SeoField icon={<RingsIcon />} title="Canonical">
              <FieldText $color="#fb7f7f">Missing</FieldText>
            </SeoField>
          </MainCard>
          <RobotsCard>
            <RobotsItem>
              <IconBox><Tag size={22} strokeWidth={2.4} /></IconBox>
              <RobotsText>
                <RobotsHead><FieldTitle>Robots Tag</FieldTitle><Help $gap={15}>?</Help></RobotsHead>
                <RobotsMissing>Missing</RobotsMissing>
              </RobotsText>
            </RobotsItem>
            <RobotsItem>
              <IconBox><TagShape /><TagCount>2</TagCount></IconBox>
              <RobotsText>
                <RobotsHead><FieldTitle>X-Robots-Tag</FieldTitle><Help $gap={16}>?</Help></RobotsHead>
                <RobotsMissing>Missing</RobotsMissing>
              </RobotsText>
            </RobotsItem>
          </RobotsCard>
        </PopupBody>
        <Scrollbar thumb={423} pad={10} bg="#fafafa" />
      </Popup>
    </Screen>
  );
}
